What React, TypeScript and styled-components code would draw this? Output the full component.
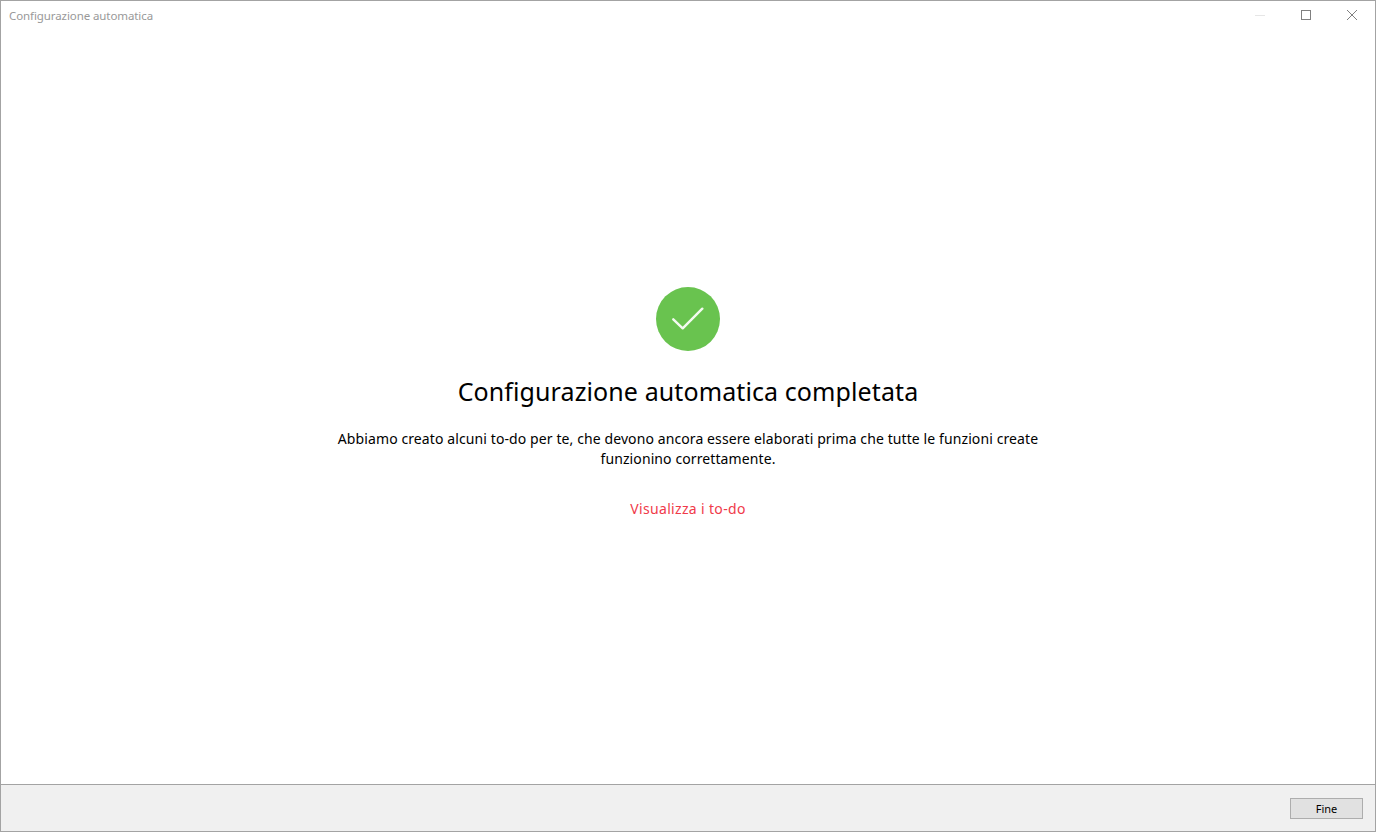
import React from "react"
import styled, { createGlobalStyle } from "styled-components"

const GlobalStyle = createGlobalStyle`
    html, body {
        margin: 0;
        padding: 0;
        height: 100%;
        background: #ffffff;
    }
    #root {
        height: 100%;
    }
`

const Window = styled.div`
    box-sizing: border-box;
    display: flex;
    flex-direction: column;
    width: 1376px;
    height: 832px;
    border: 1px solid #a3a3a3;
    background: #ffffff;
    font-family: "Noto Sans", "Open Sans", sans-serif;
    color: #000000;
`

const TitleBar = styled.div`
    display: flex;
    align-items: center;
    justify-content: space-between;
    height: 30px;
    flex-shrink: 0;
`

const Title = styled.div`
    padding: 0 0 2px 8px;
    font-size: 11.5px;
    letter-spacing: -0.09px;
    color: #999999;
`

const WindowButtons = styled.div`
    display: flex;
    align-items: center;
    padding-bottom: 2px;
`

const WindowButton = styled.div`
    display: flex;
    align-items: center;
    justify-content: center;
    width: 46px;
    height: 28px;
`

const Content = styled.main`
    flex: 1;
    display: flex;
    flex-direction: column;
    align-items: center;
    padding-top: 256px;
`

const SuccessBadge = styled.div`
    display: flex;
    align-items: center;
    justify-content: center;
    width: 64px;
    height: 64px;
    border-radius: 50%;
    background: #69c34f;
`

const Heading = styled.h1`
    margin: 21px 0 0;
    font-size: 25px;
    font-weight: 400;
    line-height: 38px;
    letter-spacing: 0.1px;
`

const Message = styled.p`
    margin: 19px 0 0;
    width: 720px;
    font-size: 14px;
    line-height: 20px;
    letter-spacing: 0.1px;
    text-align: center;
`

const TodoLink = styled.a`
    margin-top: 30px;
    font-size: 14px;
    line-height: 20px;
    letter-spacing: 0.34px;
    color: #f03a4a;
    cursor: pointer;
`

const Footer = styled.footer`
    box-sizing: border-box;
    display: flex;
    align-items: center;
    justify-content: flex-end;
    height: 47px;
    flex-shrink: 0;
    padding: 0 12px 0 0;
    border-top: 1px solid #a3a3a3;
    background: #f0f0f0;
`

const FinishButton = styled.button`
    box-sizing: border-box;
    width: 73px;
    height: 21px;
    padding: 0;
    border: 1px solid #adadad;
    background: #e1e1e1;
    font-family: "Noto Sans", "Open Sans", sans-serif;
    font-size: 11px;
    color: #000000;
`

export default function App() {
    return (
        <>
            <GlobalStyle />
            <Window>
                <TitleBar>
                    <Title>Configurazione automatica</Title>
                    <WindowButtons>
                        <WindowButton>
                            <svg width="10" height="10" viewBox="0 0 10 10">
                                <path d="M0 5.5H10" stroke="#e6e6e6" fill="none" />
                            </svg>
                        </WindowButton>
                        <WindowButton>
                            <svg width="10" height="10" viewBox="0 0 10 10">
                                <rect x="0.5" y="0.5" width="9" height="9" stroke="#808080" fill="none" />
                            </svg>
                        </WindowButton>
                        <WindowButton>
                            <svg width="10" height="10" viewBox="0 0 10 10">
                                <path d="M0 0L10 10M10 0L0 10" stroke="#808080" fill="none" />
                            </svg>
                        </WindowButton>
                    </WindowButtons>
                </TitleBar>
                <Content>
                    <SuccessBadge>
                        <svg width="32" height="26" viewBox="0 0 32 26">
                            <path
                                d="M1.3 13.3L10.7 22.3L30.3 2.7"
                                stroke="#f4faf1"
                                strokeWidth="2.4"
                                strokeLinecap="round"
                                strokeLinejoin="round"
                                fill="none"
                            />
                        </svg>
                    </SuccessBadge>
                    <Heading>Configurazione automatica completata</Heading>
                    <Message>
                        Abbiamo creato alcuni to-do per te, che devono ancora essere elaborati prima che tutte le funzioni create funzionino correttamente.
                    </Message>
                    <TodoLink>Visualizza i to-do</TodoLink>
                </Content>
                <Footer>
                    <FinishButton>Fine</FinishButton>
                </Footer>
            </Window>
        </>
    )
}
